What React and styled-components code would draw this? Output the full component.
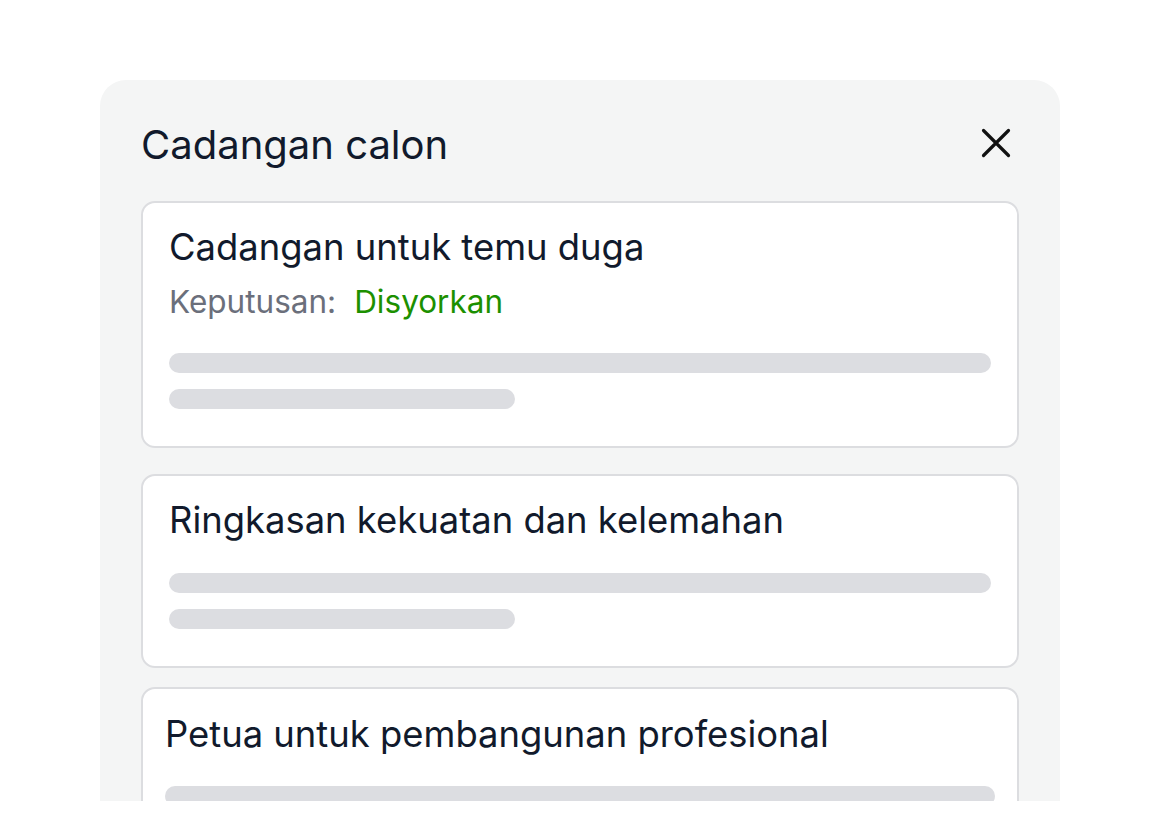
import React from "react";
import styled, { createGlobalStyle } from "styled-components";

const GlobalStyle = createGlobalStyle`
  html, body {
    margin: 0;
    padding: 0;
    background: #ffffff;
    font-family: Inter, "Noto Sans", sans-serif;
    overflow: hidden;
  }
`;

const suggestions = [
  {
    title: "Cadangan untuk temu duga",
    decision: "Disyorkan",
  },
  {
    title: "Ringkasan kekuatan dan kelemahan",
  },
  {
    title: "Petua untuk pembangunan profesional",
    compact: true,
  },
];

const App = () => {
  return (
    <Page>
      <GlobalStyle />
      <Panel>
        <Header>
          <Title>Cadangan calon</Title>
          <CloseButton aria-label="Tutup">
            <svg width="32" height="32" viewBox="0 0 32 32" fill="none">
              <path
                d="M3.5 3.5L28.5 28.5M28.5 3.5L3.5 28.5"
                stroke="#111111"
                strokeWidth="3.2"
                strokeLinecap="round"
              />
            </svg>
          </CloseButton>
        </Header>
        <CardList>
          {suggestions.map((item) => (
            <Card key={item.title} $compact={item.compact}>
              <CardTitle>{item.title}</CardTitle>
              {item.decision && (
                <Meta>
                  <MetaLabel>Keputusan:</MetaLabel>
                  <MetaValue>{item.decision}</MetaValue>
                </Meta>
              )}
              <Lines $compact={item.compact}>
                <Line />
                <Line $short />
              </Lines>
            </Card>
          ))}
        </CardList>
      </Panel>
    </Page>
  );
};

export default App;

const Page = styled.div`
  width: 1160px;
  height: 822px;
  padding: 80px 100px 0;
  box-sizing: border-box;
`;

const Panel = styled.div`
  width: 960px;
  height: 721px;
  overflow: hidden;
  background: #f4f5f5;
  border-radius: 26px 26px 0 0;
  padding: 43px 41px 0;
  box-sizing: border-box;
`;

const Header = styled.div`
  display: flex;
  align-items: center;
  justify-content: space-between;
  height: 42px;
  margin-bottom: 36px;
`;

const Title = styled.h2`
  margin: 0;
  font-size: 40px;
  font-weight: 400;
  color: #111a2c;
`;

const CloseButton = styled.button`
  display: flex;
  align-items: center;
  justify-content: center;
  width: 40px;
  height: 40px;
  margin-right: 3px;
  margin-top: -3px;
  padding: 0;
  border: none;
  background: transparent;
`;

const CardList = styled.div`
  display: flex;
  flex-direction: column;
  gap: 26px;
`;

const Card = styled.div`
  background: #ffffff;
  border: 2px solid #dcdde0;
  border-radius: 14px;
  padding: ${(p) => (p.$compact ? "25px 22px 36px" : "24px 26px 37px")};
  margin-top: ${(p) => (p.$compact ? "-7px" : "0")};
`;

const CardTitle = styled.div`
  font-size: 36.4px;
  line-height: 40px;
  color: #111a2c;
`;

const Meta = styled.div`
  display: flex;
  align-items: center;
  gap: 18px;
  margin-top: 17px;
  margin-bottom: 2px;
  font-size: 31.5px;
  line-height: 36px;
`;

const MetaLabel = styled.span`
  color: #6b6f7b;
`;

const MetaValue = styled.span`
  color: #1c9000;
`;

const Lines = styled.div`
  display: flex;
  flex-direction: column;
  gap: 16px;
  margin-top: ${(p) => (p.$compact ? "32px" : "33px")};
`;

const Line = styled.div`
  height: 20px;
  border-radius: 10px;
  background: #dcdde1;
  width: ${(p) => (p.$short ? "346px" : "100%")};
`;
